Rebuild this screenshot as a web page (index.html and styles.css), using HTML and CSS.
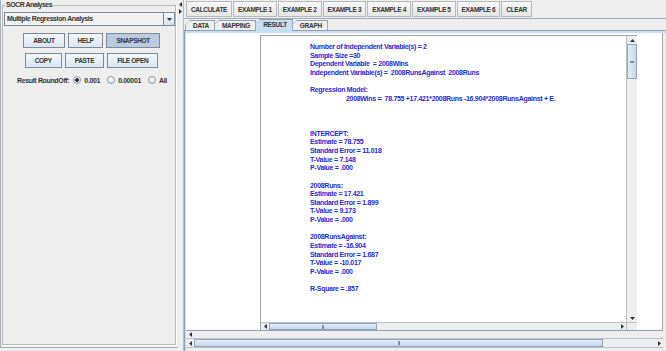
FILE: index.html
```html
<!DOCTYPE html>
<html lang="en">
<head>
  <meta charset="UTF-8">
  <meta name="viewport" content="width=device-width, initial-scale=1.0">
  <title>SOCR Analyses - Multiple Regression</title>
  <link rel="stylesheet" href="styles.css">
</head>
<body>
  <div class="app">
    <aside class="sidebar">
      <fieldset class="group">
        <legend>SOCR Analyses</legend>
        <div class="combo">
          <span class="combo-text">Multiple Regression Analysis</span>
          <span class="combo-btn">
            <svg width="5" height="3" viewBox="0 0 5 3"><path d="M0 0h5L2.5 3z" fill="#333"/></svg>
          </span>
        </div>
        <div class="btn-row first">
          <button class="btn">ABOUT</button>
          <button class="btn">HELP</button>
          <button class="btn active">SNAPSHOT</button>
        </div>
        <div class="btn-row second">
          <button class="btn">COPY</button>
          <button class="btn">PASTE</button>
          <button class="btn">FILE OPEN</button>
        </div>
        <div class="roundoff">
          <span class="roundoff-label">Result RoundOff:</span>
          <label class="radio"><span class="dot checked"></span>0.001</label>
          <label class="radio"><span class="dot"></span>0.00001</label>
          <label class="radio"><span class="dot"></span>All</label>
        </div>
      </fieldset>
    </aside>

    <div class="divider">
      <svg width="3" height="5" viewBox="0 0 3 5"><path d="M0 2.5L3 0v5z" fill="#333"/></svg>
      <svg width="3" height="5" viewBox="0 0 3 5"><path d="M3 2.5L0 0v5z" fill="#333"/></svg>
    </div>

    <main class="workspace">
      <div class="toolbar">
        <button class="tool">CALCULATE</button>
        <button class="tool">EXAMPLE 1</button>
        <button class="tool">EXAMPLE 2</button>
        <button class="tool">EXAMPLE 3</button>
        <button class="tool">EXAMPLE 4</button>
        <button class="tool">EXAMPLE 5</button>
        <button class="tool">EXAMPLE 6</button>
        <button class="tool">CLEAR</button>
      </div>

      <div class="tabs">
        <span class="tab">DATA</span>
        <span class="tab">MAPPING</span>
        <span class="tab selected">RESULT</span>
        <span class="tab">GRAPH</span>
      </div>

      <div class="tab-body">
        <div class="viewport">
          <div class="result-pane">
            <div class="result-row">
<pre class="result-text">Number of Independent Variable(s) = 2
Sample Size =30
Dependent Variable  = 2008Wins
Independent Variable(s) =  2008RunsAgainst  2008Runs

Regression Model:
		2008Wins =  78.755 +17.421*2008Runs -16.904*2008RunsAgainst + E.



INTERCEPT:
Estimate = 78.755
Standard Error = 11.018
T-Value = 7.148
P-Value = .000

2008Runs:
Estimate = 17.421
Standard Error = 1.899
T-Value = 9.173
P-Value = .000

2008RunsAgainst:
Estimate = -16.904
Standard Error = 1.687
T-Value = -10.017
P-Value = .000

R-Square = .857</pre>
              <div class="vbar">
                <span class="arrow">
                  <svg width="5" height="3" viewBox="0 0 5 3"><path d="M0 3h5L2.5 0z" fill="#333"/></svg>
                </span>
                <span class="thumb v"></span>
                <span class="track"></span>
                <span class="arrow">
                  <svg width="5" height="3" viewBox="0 0 5 3"><path d="M0 0h5L2.5 3z" fill="#333"/></svg>
                </span>
              </div>
            </div>
            <div class="hbar-row">
              <div class="hbar">
                <span class="arrow">
                  <svg width="3" height="5" viewBox="0 0 3 5"><path d="M0 2.5L3 0v5z" fill="#333"/></svg>
                </span>
                <span class="thumb inner"></span>
                <span class="track"></span>
                <span class="arrow">
                  <svg width="3" height="5" viewBox="0 0 3 5"><path d="M3 2.5L0 0v5z" fill="#333"/></svg>
                </span>
              </div>
              <div class="corner"></div>
            </div>
          </div>
        </div>

        <div class="hbar outer">
          <span class="arrow">
            <svg width="3" height="5" viewBox="0 0 3 5"><path d="M0 2.5L3 0v5z" fill="#333"/></svg>
          </span>
          <span class="track"></span>
        </div>
        <div class="hbar outer">
          <span class="arrow">
            <svg width="3" height="5" viewBox="0 0 3 5"><path d="M0 2.5L3 0v5z" fill="#333"/></svg>
          </span>
          <span class="thumb wide"></span>
          <span class="track"></span>
          <span class="arrow">
            <svg width="3" height="5" viewBox="0 0 3 5"><path d="M3 2.5L0 0v5z" fill="#333"/></svg>
          </span>
        </div>
      </div>
    </main>
  </div>
</body>
</html>
```

FILE: styles.css
```css
* {
  margin: 0;
  padding: 0;
  box-sizing: border-box;
}

body {
  width: 666px;
  height: 351px;
  overflow: hidden;
  background: #eeeeee;
  font-family: "Liberation Sans", Arial, sans-serif;
  font-weight: bold;
  font-size: 7px;
  color: #333333;
}

.app {
  display: flex;
  height: 351px;
}

/* left panel */
.sidebar {
  width: 178px;
  display: flex;
  flex-direction: column;
  border-left: 1px solid #a4b0bd;
  border-bottom: 1px solid #a4b0bd;
  margin-bottom: 3px;
}

.group {
  flex: 1;
  min-width: 0;
  margin: 0 2px 2px 1px;
  border: 1px solid #b8b8b8;
  box-shadow: 1px 1px 0 #ffffff;
}

.group legend {
  margin-left: 2px;
  padding: 0 1px;
  line-height: 10px;
  letter-spacing: -0.5px;
}

.combo {
  display: flex;
  height: 14px;
  margin: 2px 0 0 1px;
  border: 1px solid #7a8a99;
  background: #f2f2f2;
}

.combo-text {
  flex: 1;
  padding-left: 2px;
  line-height: 12px;
  letter-spacing: -0.4px;
}

.combo-btn {
  width: 11px;
  display: flex;
  align-items: center;
  justify-content: center;
  border-left: 1px solid #7a8a99;
  background: linear-gradient(#f4f8fb, #d6e2ee);
}

.btn-row {
  display: flex;
  justify-content: center;
  gap: 3px;
  padding-left: 5px;
}

.btn-row.first {
  margin-top: 7px;
}

.btn-row.second {
  margin-top: 5px;
}

.btn {
  height: 15px;
  padding: 0 9px;
  border: 1px solid #7a8a99;
  background: linear-gradient(#f5f8fb, #dbe5f0);
  font: inherit;
  font-size: 6.5px;
  letter-spacing: -0.35px;
  color: #333333;
}

.btn.active {
  background: #b8cbe0;
}

.roundoff {
  display: flex;
  align-items: center;
  height: 10px;
  margin-top: 7px;
  padding-left: 14px;
  letter-spacing: -0.35px;
}

.roundoff-label {
  margin-right: 4px;
}

.radio {
  display: flex;
  align-items: center;
  gap: 3px;
  margin-right: 7px;
}

.dot {
  width: 8px;
  height: 8px;
  border-radius: 50%;
  border: 1px solid #8a98a6;
  background: linear-gradient(#fbfcfd, #dde6ef);
}

.dot.checked {
  background: radial-gradient(circle, #333333 1.6px, transparent 2.1px), linear-gradient(#fbfcfd, #dde6ef);
}

/* split pane divider */
.divider {
  width: 6px;
  display: flex;
  flex-direction: column;
  align-items: center;
  gap: 2px;
  padding-top: 2px;
  border-right: 1px solid #b4bcc4;
}

/* right side */
.workspace {
  flex: 1;
  display: flex;
  flex-direction: column;
  min-width: 0;
}

.toolbar {
  display: flex;
  gap: 1px;
  height: 19px;
  padding: 1px 0 1px 2px;
  border-bottom: 1px solid #a3acb6;
}

.tool {
  height: 16px;
  padding: 0 4px;
  border: 1px solid #b4b9bf;
  background: linear-gradient(#f8f8f8, #e6e6e6);
  font: inherit;
  font-size: 6.5px;
  letter-spacing: -0.35px;
  color: #333333;
}

.tabs {
  display: flex;
  align-items: flex-end;
  height: 11px;
  padding-left: 1px;
}

.tab {
  height: 10px;
  padding: 0 5px 0 7px;
  margin-right: -1px;
  border: 1px solid #8da0b4;
  border-bottom: none;
  line-height: 9px;
  font-size: 6.5px;
  letter-spacing: -0.3px;
  background: linear-gradient(135deg, transparent 3px, #8da0b4 3px, #8da0b4 4px, transparent 4px) border-box, #eeeeee;
  clip-path: polygon(5px 0, 100% 0, 100% 100%, 0 100%, 0 5px);
}

.tab.selected {
  position: relative;
  z-index: 1;
  height: 12px;
  margin-bottom: -1px;
  background: linear-gradient(135deg, transparent 3px, #8da0b4 3px, #8da0b4 4px, transparent 4px) border-box, #c8ddf2;
}

.tab-body {
  flex: 1;
  display: flex;
  flex-direction: column;
  min-height: 0;
  border-top: 1px solid #8da0b4;
  border-left: 1px solid #8da0b4;
  padding: 2px 0 3px 1px;
  background:
    linear-gradient(#c8ddf2, #c8ddf2) left top / 100% 2px no-repeat,
    linear-gradient(#c8ddf2, #c8ddf2) left top / 1px 100% no-repeat,
    #eeeeee;
}

.viewport {
  flex: 1;
  display: flex;
  min-height: 0;
  margin-right: 3px;
  padding: 2px 0 0 74px;
  background: #ffffff;
  border-right: 1px solid #a0a8b0;
  border-bottom: 1px solid #8da0b4;
}

.result-pane {
  width: 377px;
  display: flex;
  flex-direction: column;
  border-left: 1px solid #9da7b2;
  border-top: 1px solid #9da7b2;
}

.result-row {
  flex: 1;
  display: flex;
  min-height: 0;
}

.result-text {
  flex: 1;
  min-width: 0;
  overflow: hidden;
  padding: 7px 0 0 49px;
  font: inherit;
  line-height: 8.65px;
  letter-spacing: -0.3px;
  tab-size: 18px;
  color: #2a2ad0;
}

/* scrollbars */
.vbar {
  width: 11px;
  display: flex;
  flex-direction: column;
  border-left: 1px solid #b8c0c8;
  background: #eeeeee;
}

.hbar-row {
  height: 8px;
  display: flex;
}

.hbar {
  flex: 1;
  display: flex;
  border-top: 1px solid #b8c0c8;
  background: #eeeeee;
}

.hbar.outer {
  flex: none;
  height: 8px;
  margin-right: 3px;
  border-top: none;
  border-bottom: 1px solid #b8c0c8;
}

.hbar.outer + .hbar.outer {
  height: 9px;
}

.corner {
  width: 11px;
  background: #eeeeee;
  border-top: 1px solid #b8c0c8;
  border-left: 1px solid #b8c0c8;
}

.arrow {
  display: flex;
  align-items: center;
  justify-content: center;
  flex: none;
}

.vbar .arrow {
  height: 8px;
}

.hbar .arrow {
  width: 8px;
}

.track {
  flex: 1;
}

.thumb {
  flex: none;
  border: 1px solid #8ea6c0;
}

.thumb.v {
  height: 35px;
  background:
    linear-gradient(#7f8fa0, #7f8fa0) center / 4px 2px no-repeat,
    linear-gradient(90deg, #e6eef6, #c4d6e9);
}

.thumb.inner {
  width: 108px;
  background:
    linear-gradient(#7f8fa0, #7f8fa0) center / 2px 4px no-repeat,
    linear-gradient(#e6eef6, #c4d6e9);
}

.thumb.wide {
  width: 409px;
  background:
    linear-gradient(#7f8fa0, #7f8fa0) center / 2px 4px no-repeat,
    linear-gradient(#e6eef6, #c4d6e9);
}
```
